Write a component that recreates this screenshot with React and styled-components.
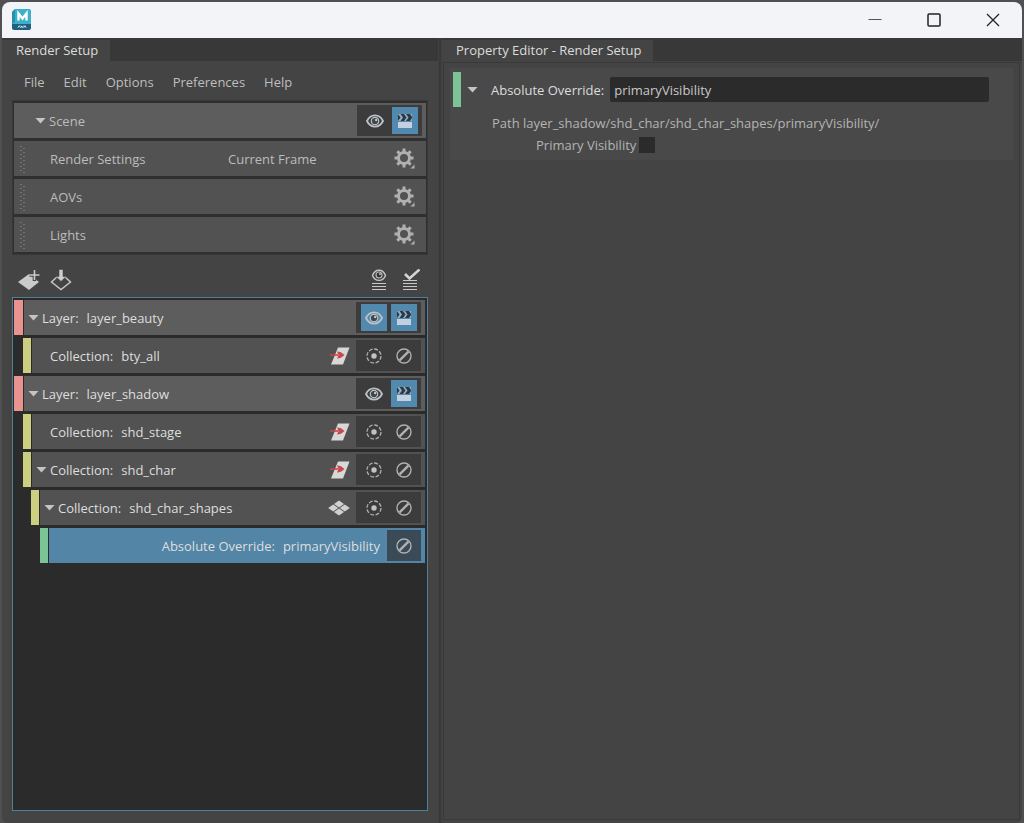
import { useState } from "react";
import styled, { createGlobalStyle } from "styled-components";

const GlobalStyle = createGlobalStyle`
  * {
    box-sizing: border-box;
  }

  body {
    margin: 0;
    background: #4b4b4b;
    color: #c8c8c8;
    font-family: "Open Sans", "Noto Sans", sans-serif;
    font-size: 13px;
    line-height: 18px;
  }

  button,
  input {
    font: inherit;
    color: inherit;
  }

  svg {
    display: block;
  }
`;

const Desktop = styled.div`
  height: 100vh;
  padding: 2px 2px 0;
  background: #505050;
`;

const AppWindow = styled.div`
  height: 100%;
  display: flex;
  flex-direction: column;
  background: #444444;
  border-radius: 8px 8px 6px 6px;
  overflow: hidden;
`;

const TitleBar = styled.header`
  display: flex;
  align-items: center;
  justify-content: space-between;
  flex: none;
  height: 36px;
  padding: 0 4px 0 10px;
  background: #f3f4f8;
  color: #1c1c1c;
`;

const WindowButtons = styled.div`
  display: flex;
  gap: 9px;
`;

const PlainButton = styled.button`
  display: flex;
  align-items: center;
  justify-content: center;
  padding: 0;
  border: 0;
  background: none;
`;

const WindowButton = styled(PlainButton)`
  width: 50px;
  height: 34px;
`;

const Docks = styled.main`
  flex: 1;
  display: flex;
  min-height: 0;
`;

const Dock = styled.section`
  display: flex;
  flex-direction: column;
  min-width: 0;
  flex: ${(props) => (props.$grow ? "1" : "0 1 436px")};
`;

const Splitter = styled.div`
  width: 4px;
  background: #3a3a3a;
  border-left: 1px solid #404040;
  border-right: 1px solid #404040;
`;

const TabBar = styled.div`
  display: flex;
  flex: none;
  height: 23px;
  padding-top: 2px;
  background: #373837;
`;

const Tab = styled.button`
  height: 21px;
  padding: 0 12px 0 14px;
  border: 0;
  background: #444444;
  color: #dcdcdc;
  line-height: 21px;
`;

const MenuBar = styled.nav`
  display: flex;
  gap: 19px;
  padding: 11px 22px 8px;
`;

const MenuItem = styled.button`
  padding: 0;
  border: 0;
  background: none;
  color: #bebebe;
  line-height: 20px;
`;

const ScenePanel = styled.div`
  display: flex;
  flex-direction: column;
  gap: 3px;
  margin: 0 10px;
  padding: 2px 1px;
  background: #2f2f2f;
  border: 1px solid #383838;
`;

const SceneRow = styled.div`
  display: flex;
  align-items: center;
  height: 35px;
  padding-left: ${(props) => (props.$header ? "21px" : "6px")};
  background: ${(props) => (props.$header ? "#5d5d5d" : "#525252")};
  color: #bcbcbc;
`;

const SceneName = styled.span`
  width: 178px;
`;

const SceneValue = styled.span`
  flex: 1;
`;

const Grip = styled.span`
  width: 30px;
`;

const GearButton = styled(PlainButton)`
  width: 26px;
  height: 26px;
  margin-right: 8px;
`;

const Toolbar = styled.div`
  display: flex;
  align-items: center;
  gap: 6px;
  height: 42px;
  padding: 7px 14px 0;
`;

const ToolButton = styled(PlainButton)`
  width: 26px;
  height: 26px;
`;

const ToolSpacer = styled.span`
  flex: 1;
`;

const LayerList = styled.div`
  flex: 1;
  display: flex;
  flex-direction: column;
  gap: 3px;
  min-height: 0;
  margin: 0 10px 12px;
  padding: 2px 2px 2px 1px;
  background: #2b2b2b;
  border: 1px solid #4f7f98;
`;

const indents = [0, 9, 17, 26];
const barColors = { layer: "#e8938d", collection: "#cdcf80", override: "#7cc495" };

const LayerRow = styled.div`
  display: flex;
  gap: 1px;
  height: 35px;
  flex: none;
  margin-left: ${(props) => indents[props.$depth]}px;
`;

const ColorBar = styled.span`
  width: ${(props) => (props.$kind === "layer" ? "9px" : "8px")};
  height: 35px;
  background: ${(props) => barColors[props.$kind]};
`;

const rowColors = { layer: "#5d5d5d", collection: "#525252", override: "#5285a6" };

const RowBody = styled.div`
  flex: 1;
  display: flex;
  align-items: center;
  min-width: 0;
  padding-left: 4px;
  background: ${(props) => rowColors[props.$kind]};
  color: #dedede;
`;

const Caret = styled.button`
  width: 11px;
  height: 6px;
  margin-right: 3px;
  padding: 0;
  border: 0;
  background: #c4c4c4;
  clip-path: polygon(0 0, 100% 0, 50% 100%);
  visibility: ${(props) => (props.$hidden ? "hidden" : "visible")};
`;

const RowLabel = styled.span`
  display: flex;
  flex: 1;
  gap: 8px;
  justify-content: ${(props) => (props.$right ? "flex-end" : "flex-start")};
  margin-right: 7px;
  white-space: nowrap;
`;

const SelectorIcon = styled.span`
  margin-right: 6px;
`;

const Actions = styled.div`
  display: flex;
  gap: 4px;
  margin-right: 4px;
  padding: 2px 4px 2px ${(props) => (props.$single ? "4px" : "5px")};
  background: ${(props) => (props.$single ? "#3b4a57" : "#3c3c3c")};
`;

const ActionButton = styled(PlainButton)`
  width: 26px;
  height: 27px;
  background: ${(props) => (props.$on ? "#5289ae" : "transparent")};
`;

const EditorBody = styled.div`
  flex: 1;
  margin: 1px 2px 3px 1px;
  padding: 5px 6px;
  border: 1px solid #393939;
`;

const EditorCard = styled.div`
  display: flex;
  flex-direction: column;
  padding: 4px 24px 6px 3px;
  background: #494949;
`;

const EditorHeader = styled.div`
  display: flex;
  align-items: center;
  height: 35px;

  label {
    flex: none;
    margin: 0 6px 0 9px;
    color: #dcdcdc;
  }
`;

const EditorCaret = styled(Caret)`
  margin: 0 4px 0 6px;
`;

const NameInput = styled.input`
  flex: 1;
  min-width: 0;
  height: 25px;
  padding: 0 4px;
  border: 0;
  border-radius: 2px;
  background: #2b2b2b;
  color: #c8c8c8;
`;

const PathText = styled.div`
  margin: 7px 0 0 39px;
  color: #b4b4b4;
`;

const CheckRow = styled.div`
  display: flex;
  align-items: center;
  gap: 3px;
  margin: 4px 0 0 83px;
  color: #b4b4b4;
`;

const Checkbox = styled.input`
  appearance: none;
  width: 16px;
  height: 16px;
  margin: 0;
  background: #2b2b2b;

  &:checked {
    background: #5285a6;
  }
`;

const MayaLogo = () => (
  <svg width="20" height="22" viewBox="0 0 20 22">
    <path d="M3 0H17a2 2 0 0 1 2 2V15H0V3z" fill="#3bb0c8" />
    <path d="M3 0L0 3v12l3-2z" fill="#2790a8" />
    <path d="M0 15H19V19a2 2 0 0 1-2 2H2a2 2 0 0 1-2-2z" fill="#1d5f7c" />
    <path d="M6.500 11.500V4.500L10.500 9.500 14.500 4.500v7" fill="none" stroke="#fff" strokeWidth="2.400" />
    <path d="M6 18.700l1.300-2 1.300 2M9 16.700l1.200 2 1.200-2M11.700 18.700l1.200-2 1.200 2" fill="none" stroke="#d8edf1" />
  </svg>
);

const EyeIcon = () => (
  <svg width="18" height="14" viewBox="0 0 18 14">
    <path d="M1 7C4.500-.4 13.500-.4 17 7 13.500 14.400 4.500 14.400 1 7z" fill="none" stroke="#bcc2c6" strokeWidth="1.800" />
    <circle cx="9" cy="7" r="4.300" fill="#bcc2c6" />
    <circle cx="9" cy="7" r="3.100" fill="#3f464b" />
    <circle cx="10.200" cy="6" r="1.200" fill="#c2c8cc" />
  </svg>
);

const ClapperIcon = () => (
  <svg width="16" height="16" viewBox="0 0 16 16">
    <path d="M1 9h14v6H1z" fill="#c2d0df" />
    <path d="M1 1h14v7H1z" fill="#2c3843" />
    <path d="M1 1h2.500L6 4.500 3.500 8H1l2.500-3.500zM7 1h2l2.500 3.500L9 8H7l2.500-3.500zM13 1h2v3z" fill="#93aec2" />
    <path d="M13 8l2-3v3z" fill="#93aec2" />
  </svg>
);

const GearIcon = () => (
  <svg width="22" height="22" viewBox="0 0 22 22">
    <g stroke="#b0b0b0" strokeWidth="3">
      <path d="M10 0.500v4M10 15.500v4M0.500 10h4M15.500 10h4" />
      <path d="M3.300 3.300l2.800 2.800M13.900 13.900l2.800 2.800M3.300 16.700l2.800-2.800M13.900 6.100l2.800-2.800" />
    </g>
    <circle cx="10" cy="10" r="5.500" fill="none" stroke="#b0b0b0" strokeWidth="3" />
    <path d="M15.500 21h5.500v-5.500z" fill="#b0b0b0" stroke="#525252" />
  </svg>
);

const GripIcon = () => (
  <svg width="5" height="28" viewBox="0 0 5 28">
    <path d="M1 1v26" stroke="#989898" strokeDasharray="1 3" />
    <path d="M4 3v25" stroke="#989898" strokeDasharray="1 3" />
  </svg>
);

const IsolateIcon = () => (
  <svg width="16" height="16" viewBox="0 0 16 16">
    <circle cx="8" cy="8" r="7" fill="none" stroke="#b0b0b0" strokeWidth="1.300" strokeDasharray="3.800 1.700" />
    <circle cx="8" cy="8" r="2.700" fill="#c2c2c2" />
  </svg>
);

const DisableIcon = () => (
  <svg width="16" height="16" viewBox="0 0 16 16">
    <circle cx="8" cy="8" r="7" fill="none" stroke="#b0b0b0" strokeWidth="1.400" />
    <path d="M3.600 12.400l8.800-8.800" stroke="#b0b0b0" strokeWidth="2.400" />
  </svg>
);

const TransformIcon = () => (
  <svg width="20" height="18" viewBox="0 0 20 18">
    <path d="M8 0.500h11.500L13 17.500H1z" fill="#d8d8d6" />
    <path d="M0 8h8" stroke="#c4464b" strokeWidth="1.600" />
    <path d="M7 4.500c3 0 5 1 7.500 3.500C12 10.500 10 11.500 7 11.500L8.500 8z" fill="#c8484d" />
  </svg>
);

const ShapesIcon = () => (
  <svg width="22" height="16" viewBox="0 0 22 16">
    <path
      d="M11 .5l5 3.500-5 3.500L6 4zM5.200 4.500l5 3.500-5 3.500L.2 8zM16.800 4.500l5 3.500-5 3.500-5-3.500zM11 8.500l5 3.500-5 3.500L6 12z"
      fill="#d0d0d0"
    />
  </svg>
);

const NewLayerIcon = () => (
  <svg width="24" height="22" viewBox="0 0 24 22">
    <path d="M1 13L12 5l10 8-10 8z" fill="#cacaca" />
    <path d="M17.500 1v11M12.500 6h10" stroke="#444" strokeWidth="3.600" />
    <path d="M17.500 1v10M12.500 6h10" stroke="#cacaca" strokeWidth="1.600" />
  </svg>
);

const ImportLayerIcon = () => (
  <svg width="22" height="22" viewBox="0 0 22 22">
    <path d="M7.500 7.500L1.500 13 11 20.500 20.500 13 14.500 7.500" fill="none" stroke="#c4c4c4" strokeWidth="1.500" />
    <path d="M9 0.500h4v7h3l-5 5-5-5h3z" fill="#cfcfcf" stroke="#444" strokeWidth="0.600" />
  </svg>
);

const ShowAllIcon = () => (
  <svg width="16" height="22" viewBox="0 0 16 22">
    <path d="M1.500 6.500C4-.5 12-.5 14.500 6.500 12 13 4 13 1.500 6.500z" fill="none" stroke="#c4c4c4" strokeWidth="1.400" />
    <circle cx="8" cy="6" r="3.500" fill="#b8b8b8" />
    <circle cx="8" cy="6" r="2.400" fill="#333" />
    <circle cx="9" cy="5" r="1" fill="#c4c4c4" />
    <path d="M1 14.500h14M1 17.500h14M1 20.500h14" stroke="#c8c8c8" />
  </svg>
);

const EnableAllIcon = () => (
  <svg width="18" height="22" viewBox="0 0 18 22">
    <path d="M3 5l4.500 4.500L17.500 0.500" fill="none" stroke="#d4d4d4" strokeWidth="2.600" />
    <path d="M1 11.500h14M1 14.500h14M1 17.500h14M1 20.500h14" stroke="#c8c8c8" />
  </svg>
);

const layers = [
  { kind: "layer", depth: 0, label: "Layer:", name: "layer_beauty", open: true, visible: true },
  { kind: "collection", depth: 1, label: "Collection:", name: "bty_all" },
  { kind: "layer", depth: 0, label: "Layer:", name: "layer_shadow", open: true },
  { kind: "collection", depth: 1, label: "Collection:", name: "shd_stage" },
  { kind: "collection", depth: 1, label: "Collection:", name: "shd_char", open: true },
  { kind: "collection", depth: 2, label: "Collection:", name: "shd_char_shapes", open: true, shapes: true },
  { kind: "override", depth: 3, label: "Absolute Override:", name: "primaryVisibility" },
];

function RenderActions({ visible }) {
  return (
    <Actions>
      <ActionButton $on={visible} aria-label="Set visible">
        <EyeIcon />
      </ActionButton>
      <ActionButton $on aria-label="Renderable">
        <ClapperIcon />
      </ActionButton>
    </Actions>
  );
}

function LayerItem({ item }) {
  const { kind, depth, label, name, open, visible, shapes } = item;
  const isOverride = kind === "override";

  return (
    <LayerRow $depth={depth}>
      <ColorBar $kind={kind} />
      <RowBody $kind={kind}>
        <Caret $hidden={!open} aria-label={"Toggle " + name} />
        <RowLabel $right={isOverride}>
          <span>{label}</span>
          <span>{name}</span>
        </RowLabel>
        {kind === "collection" && (
          <SelectorIcon>{shapes ? <ShapesIcon /> : <TransformIcon />}</SelectorIcon>
        )}
        {kind === "layer" ? (
          <RenderActions visible={visible} />
        ) : (
          <Actions $single={isOverride}>
            {!isOverride && (
              <ActionButton aria-label="Isolate">
                <IsolateIcon />
              </ActionButton>
            )}
            <ActionButton aria-label="Disable">
              <DisableIcon />
            </ActionButton>
          </Actions>
        )}
      </RowBody>
    </LayerRow>
  );
}

function RenderSetup() {
  return (
    <Dock>
      <TabBar>
        <Tab>Render Setup</Tab>
      </TabBar>
      <MenuBar>
        {["File", "Edit", "Options", "Preferences", "Help"].map((item) => (
          <MenuItem key={item}>{item}</MenuItem>
        ))}
      </MenuBar>

      <ScenePanel>
        <SceneRow $header>
          <Caret aria-label="Toggle scene" />
          <SceneValue>Scene</SceneValue>
          <RenderActions />
        </SceneRow>
        {[
          ["Render Settings", "Current Frame"],
          ["AOVs", ""],
          ["Lights", ""],
        ].map(([name, value]) => (
          <SceneRow key={name}>
            <Grip>
              <GripIcon />
            </Grip>
            <SceneName>{name}</SceneName>
            <SceneValue>{value}</SceneValue>
            <GearButton aria-label={name + " options"}>
              <GearIcon />
            </GearButton>
          </SceneRow>
        ))}
      </ScenePanel>

      <Toolbar>
        <ToolButton aria-label="Create layer">
          <NewLayerIcon />
        </ToolButton>
        <ToolButton aria-label="Import layer">
          <ImportLayerIcon />
        </ToolButton>
        <ToolSpacer />
        <ToolButton aria-label="Show all">
          <ShowAllIcon />
        </ToolButton>
        <ToolButton aria-label="Enable all">
          <EnableAllIcon />
        </ToolButton>
      </Toolbar>

      <LayerList>
        {layers.map((item) => (
          <LayerItem key={item.name} item={item} />
        ))}
      </LayerList>
    </Dock>
  );
}

function PropertyEditor() {
  const [name, setName] = useState("primaryVisibility");

  return (
    <Dock $grow>
      <TabBar>
        <Tab>Property Editor - Render Setup</Tab>
      </TabBar>
      <EditorBody>
        <EditorCard>
          <EditorHeader>
            <ColorBar $kind="override" />
            <EditorCaret aria-label="Toggle override" />
            <label htmlFor="override-name">Absolute Override:</label>
            <NameInput id="override-name" value={name} onChange={(e) => setName(e.target.value)} />
          </EditorHeader>
          <PathText>Path layer_shadow/shd_char/shd_char_shapes/primaryVisibility/</PathText>
          <CheckRow>
            <label htmlFor="primary-visibility">Primary Visibility</label>
            <Checkbox id="primary-visibility" type="checkbox" />
          </CheckRow>
        </EditorCard>
      </EditorBody>
    </Dock>
  );
}

function App() {
  return (
    <>
      <GlobalStyle />
      <Desktop>
        <AppWindow>
          <TitleBar>
            <MayaLogo />
            <WindowButtons>
              <WindowButton aria-label="Minimize">
                <svg width="14" height="14" viewBox="0 0 14 14">
                  <path d="M0.500 6.500h13" stroke="#555" />
                </svg>
              </WindowButton>
              <WindowButton aria-label="Maximize">
                <svg width="14" height="14" viewBox="0 0 14 14">
                  <rect x="1" y="1" width="12" height="12" rx="1" fill="none" stroke="#222" strokeWidth="1.500" />
                </svg>
              </WindowButton>
              <WindowButton aria-label="Close">
                <svg width="14" height="14" viewBox="0 0 14 14">
                  <path d="M1 1l12 12M13 1L1 13" stroke="#222" strokeWidth="1.300" />
                </svg>
              </WindowButton>
            </WindowButtons>
          </TitleBar>
          <Docks>
            <RenderSetup />
            <Splitter />
            <PropertyEditor />
          </Docks>
        </AppWindow>
      </Desktop>
    </>
  );
}

export default App;
